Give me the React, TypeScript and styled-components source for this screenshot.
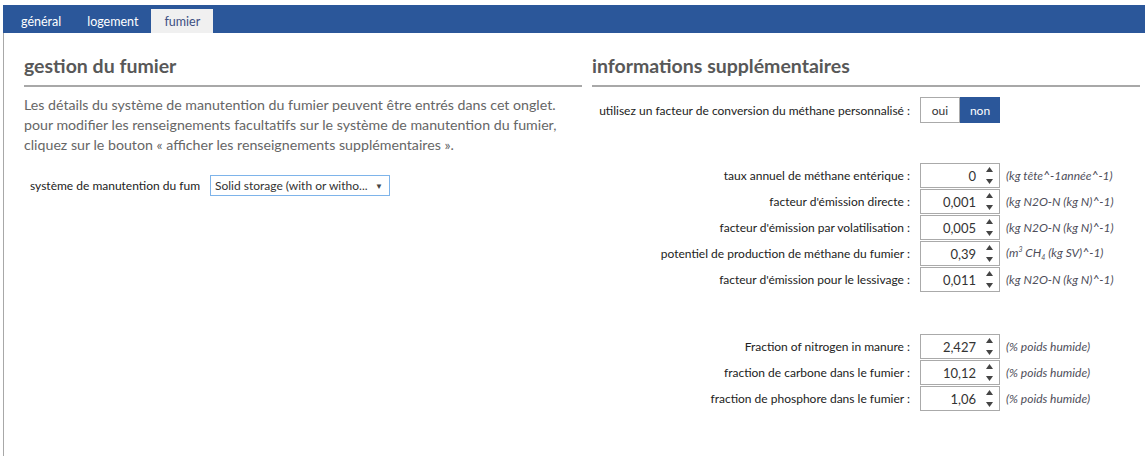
import { Fragment, ReactNode } from 'react';
import styled, { createGlobalStyle } from 'styled-components';

const GlobalStyle = createGlobalStyle`
  html, body {
    margin: 0;
    padding: 0;
    background: #ffffff;
  }
  body {
    font-family: 'Lato', 'Noto Sans', sans-serif;
    color: #222;
  }
`;

const StPage = styled.div`
  padding: 5px 0 0 3px;
  height: 456px;
  box-sizing: border-box;
  display: flex;
  flex-direction: column;
`;

const StTabBar = styled.div`
  display: flex;
  align-items: flex-end;
  height: 28px;
  padding-left: 5px;
  background: #2b579a;
`;

const StTab = styled.div<{ active?: boolean }>`
  height: 24px;
  padding: 0 13px;
  display: flex;
  align-items: center;
  font-size: 12.5px;
  color: ${(props) => (props.active ? '#3d4f82' : '#ffffff')};
  background: ${(props) => (props.active ? '#f0f0f0' : 'transparent')};
`;

const StPanel = styled.div`
  flex: 1;
  border-left: 1px solid #a8a8a8;
  display: grid;
  grid-template-columns: 558px 548px;
  column-gap: 10px;
  padding-left: 20px;
  align-items: start;
`;

const StColumn = styled.section`
  display: flex;
  flex-direction: column;
`;

const StHeading = styled.h2`
  margin: 0;
  height: 54px;
  box-sizing: border-box;
  padding-top: 21px;
  border-bottom: 2px solid #a8a8a8;
  font-size: 19.5px;
  font-weight: 700;
  color: #585858;
  line-height: 24px;
`;

const StIntro = styled.p`
  margin: 8px 0 0;
  font-size: 14.2px;
  line-height: 20px;
  color: #666;
`;

const StFieldRow = styled.div`
  display: flex;
  align-items: center;
  margin-top: 20px;
  padding-left: 6px;
  gap: 6px;
`;

const StFieldLabel = styled.span`
  width: 174px;
  white-space: nowrap;
  font-size: 12px;
  color: #222;
`;

const StSelect = styled.div`
  width: 180px;
  height: 21px;
  box-sizing: border-box;
  border: 1px solid #7eb4ea;
  display: flex;
  align-items: center;
  justify-content: space-between;
  padding: 0 6px 0 4px;
  font-size: 12px;
  color: #333;
`;

const StCaret = styled.span`
  font-size: 8px;
  color: #444;
`;

const StToggleRow = styled.div`
  display: flex;
  align-items: center;
  gap: 10px;
  margin-top: 10px;
`;

const StToggleLabel = styled.span`
  width: 318px;
  text-align: right;
  font-size: 12px;
  white-space: nowrap;
`;

const StToggle = styled.div`
  display: flex;
`;

const StToggleButton = styled.button<{ selected?: boolean }>`
  width: 40px;
  height: 26px;
  box-sizing: border-box;
  font-family: inherit;
  font-size: 12px;
  border: 1px solid ${(props) => (props.selected ? '#2b579a' : '#aaaaaa')};
  background: ${(props) => (props.selected ? '#2b579a' : '#ffffff')};
  color: ${(props) => (props.selected ? '#ffffff' : '#333')};
  padding: 0;
`;

const StGrid = styled.div`
  display: grid;
  grid-template-columns: 318px 80px auto;
  column-gap: 10px;
  row-gap: 1px;
  grid-auto-rows: 25px;
  align-items: center;
  margin-top: 40px;

  & + & {
    margin-top: 42px;
  }
`;

const StNumLabel = styled.span`
  text-align: right;
  font-size: 12px;
  white-space: nowrap;
  color: #222;
`;

const StNumBox = styled.div`
  height: 25px;
  box-sizing: border-box;
  border: 1px solid #aaaaaa;
  display: flex;
  align-items: center;
  justify-content: flex-end;
  font-size: 13px;
  color: #333;
`;

const StNumValue = styled.span`
  padding-right: 6px;
`;

const StSpinner = styled.div`
  width: 14px;
  height: 100%;
  display: flex;
  flex-direction: column;
  justify-content: space-between;
  align-items: center;
  padding: 3px 0;
  box-sizing: border-box;
  margin-right: 3px;
`;

const StUnit = styled.span`
  margin-left: -4px;
  font-size: 12px;
  font-style: italic;
  color: #4e4e5a;
  white-space: nowrap;
`;

const StSmall = styled.span<{ sub?: boolean }>`
  font-size: 7px;
  vertical-align: ${(props) => (props.sub ? 'sub' : 'super')};
`;

function Arrow({ up }: { up?: boolean }) {
  return (
    <svg width="7" height="5" viewBox="0 0 7 5">
      <path d={up ? 'M0 5 L3.5 0 L7 5 Z' : 'M0 0 L3.5 5 L7 0 Z'} fill="#444" />
    </svg>
  );
}

interface NumField {
  label: string;
  value: string;
  unit: ReactNode;
}

const factors: NumField[] = [
  { label: 'taux annuel de méthane entérique :', value: '0', unit: '(kg tête^-1année^-1)' },
  { label: "facteur d'émission directe :", value: '0,001', unit: '(kg N2O-N (kg N)^-1)' },
  { label: "facteur d'émission par volatilisation :", value: '0,005', unit: '(kg N2O-N (kg N)^-1)' },
  {
    label: 'potentiel de production de méthane du fumier :',
    value: '0,39',
    unit: (
      <>
        (m<StSmall>3</StSmall> CH<StSmall sub>4</StSmall> (kg SV)^-1)
      </>
    ),
  },
  { label: "facteur d'émission pour le lessivage :", value: '0,011', unit: '(kg N2O-N (kg N)^-1)' },
];

const fractions: NumField[] = [
  { label: 'Fraction of nitrogen in manure :', value: '2,427', unit: '(% poids humide)' },
  { label: 'fraction de carbone dans le fumier :', value: '10,12', unit: '(% poids humide)' },
  { label: 'fraction de phosphore dans le fumier :', value: '1,06', unit: '(% poids humide)' },
];

function NumberGrid({ fields }: { fields: NumField[] }) {
  return (
    <StGrid>
      {fields.map((field) => (
        <Fragment key={field.label}>
          <StNumLabel>{field.label}</StNumLabel>
          <StNumBox>
            <StNumValue>{field.value}</StNumValue>
            <StSpinner>
              <Arrow up />
              <Arrow />
            </StSpinner>
          </StNumBox>
          <StUnit>{field.unit}</StUnit>
        </Fragment>
      ))}
    </StGrid>
  );
}

function App() {
  return (
    <>
      <GlobalStyle />
      <StPage>
        <StTabBar>
          <StTab>général</StTab>
          <StTab>logement</StTab>
          <StTab active>fumier</StTab>
        </StTabBar>
        <StPanel>
          <StColumn>
            <StHeading>gestion du fumier</StHeading>
            <StIntro>
              Les détails du système de manutention du fumier peuvent être entrés dans cet onglet.
              <br />
              pour modifier les renseignements facultatifs sur le système de manutention du fumier,
              <br />
              cliquez sur le bouton « afficher les renseignements supplémentaires ».
            </StIntro>
            <StFieldRow>
              <StFieldLabel>système de manutention du fum</StFieldLabel>
              <StSelect>
                <span>Solid storage (with or witho...</span>
                <StCaret>▼</StCaret>
              </StSelect>
            </StFieldRow>
          </StColumn>
          <StColumn>
            <StHeading>informations supplémentaires</StHeading>
            <StToggleRow>
              <StToggleLabel>utilisez un facteur de conversion du méthane personnalisé :</StToggleLabel>
              <StToggle>
                <StToggleButton>oui</StToggleButton>
                <StToggleButton selected>non</StToggleButton>
              </StToggle>
            </StToggleRow>
            <NumberGrid fields={factors} />
            <NumberGrid fields={fractions} />
          </StColumn>
        </StPanel>
      </StPage>
    </>
  );
}

export default App;
